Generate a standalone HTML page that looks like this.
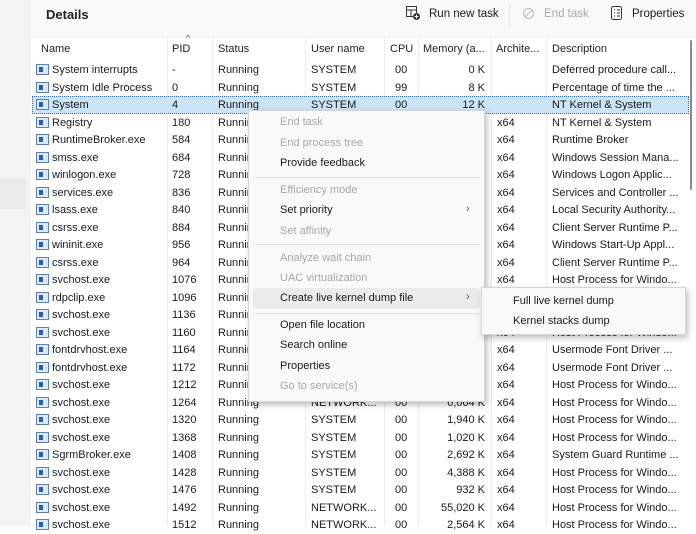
<!DOCTYPE html>
<html><head><meta charset="utf-8"><style>
*{margin:0;padding:0;box-sizing:border-box}
body{width:696px;height:526px;overflow:hidden;background:#fff;font-family:"Liberation Sans",sans-serif;font-size:11px;color:#1a1a1a;position:relative}
.abs{position:absolute;white-space:nowrap}
#side{left:0;top:0;width:31px;height:526px;background:#f3f3f3}
#top{left:31px;top:0;width:665px;height:36px;background:#f9f9f9}
.hdr{top:43px;color:#222}
.vl{position:absolute;top:37px;width:1px;height:489px;background:#ececec}
.r{position:absolute;left:31px;width:660px;height:17.5px}
.r span{position:absolute;top:3px;white-space:nowrap}
.ic{position:absolute;left:5px;top:3px;width:13px;height:11px;border:1px solid #5a7fb0;background:#dde8f5}
.ic::after{content:"";position:absolute;left:2px;top:2px;width:4px;height:5px;background:#1f5fb5}
#menu{left:248px;top:110px;width:237px;height:292px;background:#f9f9f9;border:1px solid #d5d5d5;box-shadow:2px 3px 6px rgba(0,0,0,.25)}
.mi{position:absolute;left:31px;font-size:11px}
.dis{color:#a8a8a8}
.sep{position:absolute;left:6px;width:225px;height:1px;background:#e2e2e2}
#sub{left:481px;top:287px;width:205px;height:48px;background:#f9f9f9;border:1px solid #d5d5d5;box-shadow:2px 3px 6px rgba(0,0,0,.25)}
</style></head><body>
<div id="side" class="abs"></div>
<div class="abs" style="left:0;top:178px;width:26px;height:31px;background:#ebebeb"></div>
<div id="top" class="abs"></div>
<div class="abs" style="left:46px;top:7px;font-size:13px;font-weight:bold;color:#222">Details</div>
<svg class="abs" style="left:405px;top:5px" width="16" height="16" viewBox="0 0 16 16"><rect x="1.5" y="1.5" width="10" height="10" fill="none" stroke="#333"/><line x1="1.5" y1="5" x2="11.5" y2="5" stroke="#333"/><line x1="6" y1="5" x2="6" y2="11.5" stroke="#333"/><circle cx="11.5" cy="11.5" r="3.5" fill="#333"/><path d="M11.5 9.5v4M9.5 11.5h4" stroke="#fff"/></svg>
<div class="abs" style="left:429px;top:8px;font-size:11.5px">Run new task</div>
<div class="abs" style="left:509px;top:4px;width:1px;height:22px;background:#e5e5e5"></div>
<svg class="abs" style="left:522px;top:7px" width="13" height="13"><circle cx="6.5" cy="6.5" r="5" fill="none" stroke="#bbb"/><line x1="3" y1="10" x2="10" y2="3" stroke="#bbb"/></svg>
<div class="abs" style="left:544px;top:8px;font-size:11.5px;color:#aaa">End task</div>
<svg class="abs" style="left:610px;top:5px" width="13" height="16"><rect x="1.5" y="1.5" width="10" height="13" rx="2" fill="none" stroke="#333"/><path d="M4 5h1M7 5h3M4 8h1M7 8h3M4 11h1M7 11h3" stroke="#333"/></svg>
<div class="abs" style="left:632px;top:8px;font-size:11.5px">Properties</div>
<div class="abs" style="left:31px;top:36px;width:665px;height:1px;background:#eee"></div>
<div class="vl" style="left:167px"></div><div class="vl" style="left:212px"></div><div class="vl" style="left:305px"></div><div class="vl" style="left:384px"></div><div class="vl" style="left:418px"></div><div class="vl" style="left:491px"></div><div class="vl" style="left:546px"></div>
<div class="abs" style="left:690px;top:40px;width:2px;height:150px;background:#8a8a8a;border-radius:1px"></div>
<div class="abs hdr" style="left:41px">Name</div><div class="abs hdr" style="left:172px">PID</div><div class="abs" style="left:186px;top:33px;font-size:9px;color:#666">^</div><div class="abs hdr" style="left:218px">Status</div><div class="abs hdr" style="left:311px">User name</div><div class="abs hdr" style="left:390px">CPU</div><div class="abs hdr" style="left:423px">Memory (a...</div><div class="abs hdr" style="left:496px">Archite...</div><div class="abs hdr" style="left:552px">Description</div>
<div class="abs" style="left:32px;top:96px;width:657px;height:18px;background:#cce4f7;border:1px dotted #3a6ea5"></div>
<div id="rows"></div>
<script>
var d=[["System interrupts","-","Running","SYSTEM","00","0 K","","Deferred procedure call..."],
["System Idle Process","0","Running","SYSTEM","99","8 K","","Percentage of time the ..."],
["System","4","Running","SYSTEM","00","12 K","","NT Kernel & System"],
["Registry","180","Running","SYSTEM","00","","x64","NT Kernel & System"],
["RuntimeBroker.exe","584","Running","","","","x64","Runtime Broker"],
["smss.exe","684","Running","","","","x64","Windows Session Mana..."],
["winlogon.exe","728","Running","","","","x64","Windows Logon Applic..."],
["services.exe","836","Running","","","","x64","Services and Controller ..."],
["lsass.exe","840","Running","","","","x64","Local Security Authority..."],
["csrss.exe","884","Running","","","","x64","Client Server Runtime P..."],
["wininit.exe","956","Running","","","","x64","Windows Start-Up Appl..."],
["csrss.exe","964","Running","","","","x64","Client Server Runtime P..."],
["svchost.exe","1076","Running","","","","x64","Host Process for Windo..."],
["rdpclip.exe","1096","Running","","","","x64","RDP Clipboard Monitor"],
["svchost.exe","1136","Running","","","","x64","Host Process for Windo..."],
["svchost.exe","1160","Running","","","","x64","Host Process for Windo..."],
["fontdrvhost.exe","1164","Running","","","","x64","Usermode Font Driver ..."],
["fontdrvhost.exe","1172","Running","","","","x64","Usermode Font Driver ..."],
["svchost.exe","1212","Running","","","","x64","Host Process for Windo..."],
["svchost.exe","1264","Running","NETWORK...","00","6,664 K","x64","Host Process for Windo..."],
["svchost.exe","1320","Running","SYSTEM","00","1,940 K","x64","Host Process for Windo..."],
["svchost.exe","1368","Running","SYSTEM","00","1,020 K","x64","Host Process for Windo..."],
["SgrmBroker.exe","1408","Running","SYSTEM","00","2,692 K","x64","System Guard Runtime ..."],
["svchost.exe","1428","Running","SYSTEM","00","4,388 K","x64","Host Process for Windo..."],
["svchost.exe","1476","Running","SYSTEM","00","932 K","x64","Host Process for Windo..."],
["svchost.exe","1492","Running","NETWORK...","00","55,020 K","x64","Host Process for Windo..."],
["svchost.exe","1512","Running","NETWORK...","00","2,564 K","x64","Host Process for Windo..."]];
var h="";d.forEach(function(r,i){var t=61+i*17.5;h+='<div class="r" style="top:'+t+'px"><div class="ic"></div><span style="left:21px">'+r[0]+'</span><span style="left:141px">'+r[1]+'</span><span style="left:187px">'+r[2]+'</span><span style="left:280px">'+r[3]+'</span><span style="left:364px">'+r[4]+'</span><span style="right:206px">'+r[5]+'</span><span style="left:466px">'+r[6]+'</span><span style="left:521px">'+r[7]+'</span></div>';});
document.getElementById("rows").innerHTML=h;
</script>
<div id="menu" class="abs">
<div class="mi dis" style="top:5px">End task</div>
<div class="mi dis" style="top:26px">End process tree</div>
<div class="mi" style="top:46px">Provide feedback</div>
<div class="sep" style="top:66px"></div>
<div class="mi dis" style="top:73px">Efficiency mode</div>
<div class="mi" style="top:93px">Set priority</div><div class="abs" style="left:217px;top:92px;color:#555">›</div>
<div class="mi dis" style="top:114px">Set affinity</div>
<div class="sep" style="top:133px"></div>
<div class="mi dis" style="top:141px">Analyze wait chain</div>
<div class="mi dis" style="top:161px">UAC virtualization</div>
<div class="abs" style="left:4px;top:177px;width:227px;height:21px;background:#ebebeb;border-radius:3px"></div>
<div class="mi" style="top:181px">Create live kernel dump file</div><div class="abs" style="left:217px;top:180px;color:#555">›</div>
<div class="sep" style="top:202px"></div>
<div class="mi" style="top:208px">Open file location</div>
<div class="mi" style="top:228px">Search online</div>
<div class="mi" style="top:249px">Properties</div>
<div class="mi dis" style="top:269px">Go to service(s)</div>
</div>
<div id="sub" class="abs">
<div class="abs" style="left:31px;top:7px">Full live kernel dump</div>
<div class="abs" style="left:31px;top:27px">Kernel stacks dump</div>
</div>
</body></html>
